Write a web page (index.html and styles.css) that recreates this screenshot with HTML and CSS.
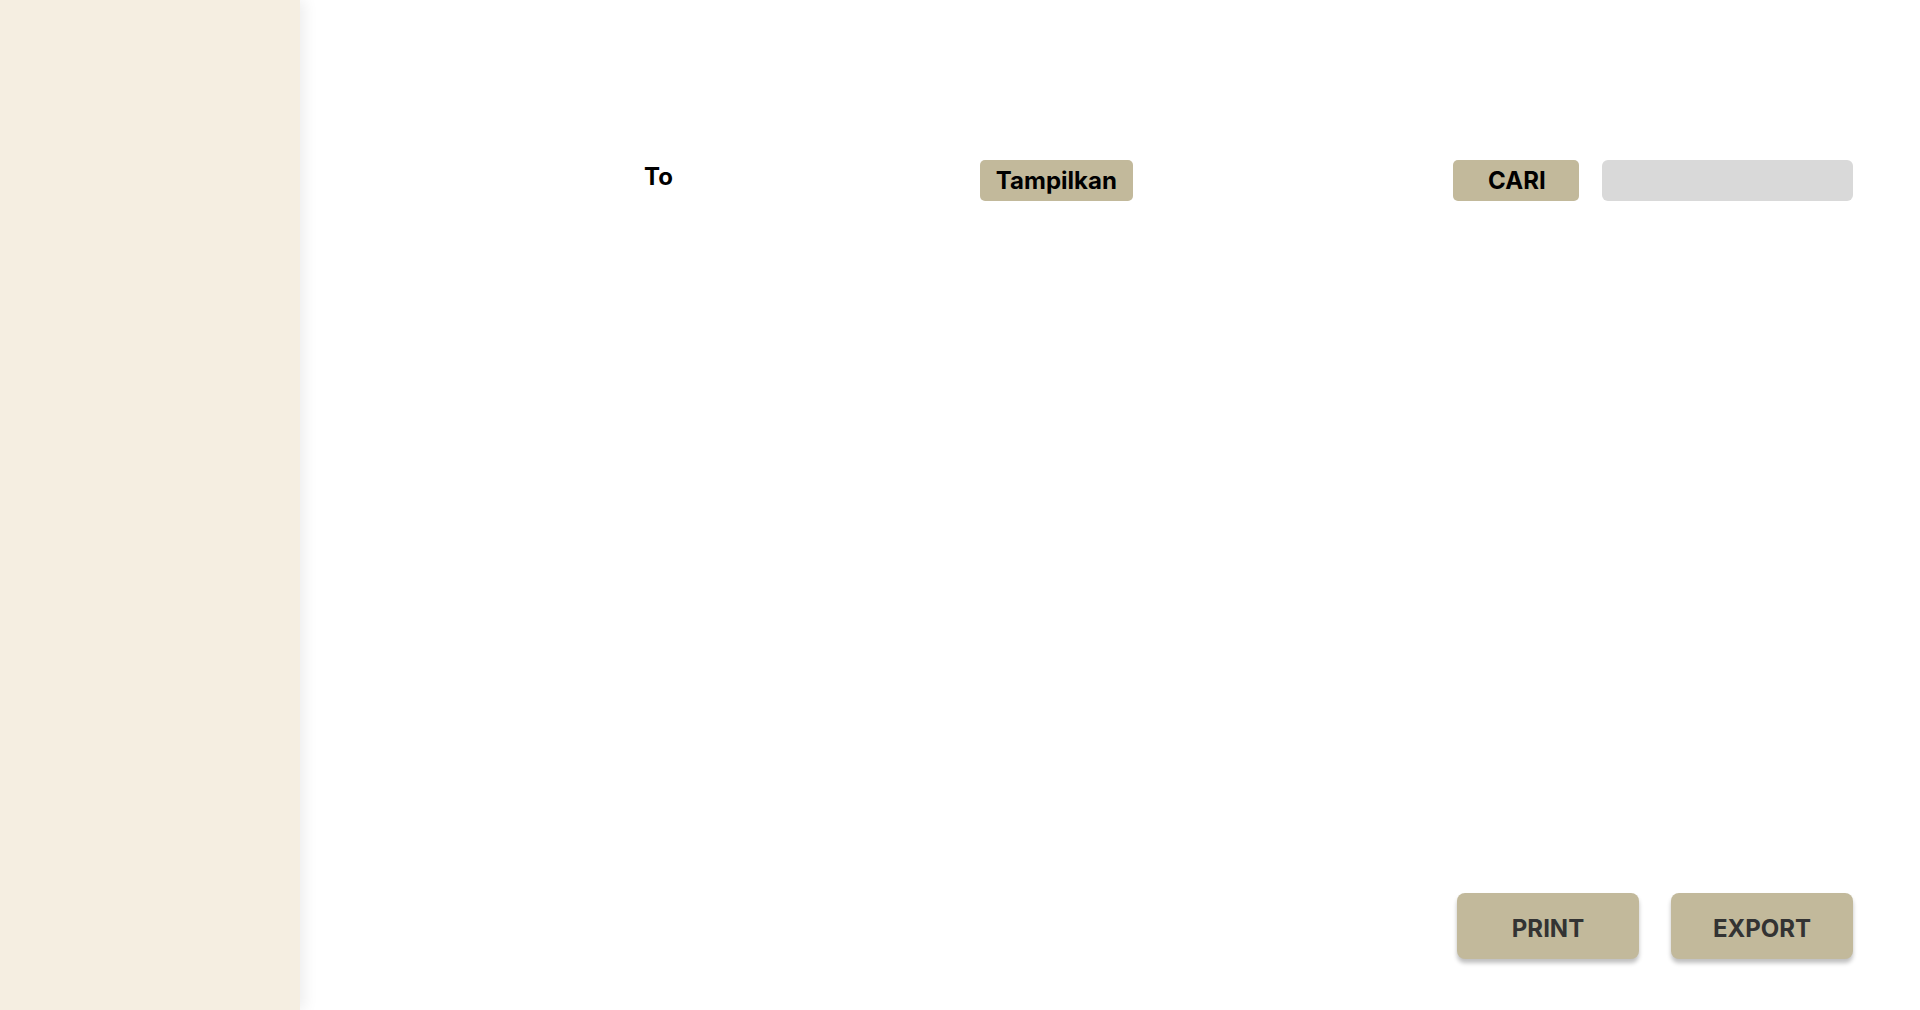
FILE: index.html
```html
<!DOCTYPE html>
<html lang="id">
<head>
<meta charset="utf-8">
<title>Laporan</title>
<link rel="stylesheet" href="styles.css">
</head>
<body>
<div class="app">
  <aside class="sidebar"></aside>
  <main class="main">
    <div class="toolbar">
      <span class="label-to">To</span>
      <button class="btn btn-show">Tampilkan</button>
      <button class="btn btn-search">CARI</button>
      <input class="search-input" type="text" aria-label="Cari">
    </div>
    <div class="content"></div>
    <div class="actions">
      <button class="btn-action">PRINT</button>
      <button class="btn-action">EXPORT</button>
    </div>
  </main>
</div>
</body>
</html>
```
FILE: styles.css
```css
html, body {
  margin: 0;
  padding: 0;
  height: 100%;
  background: #ffffff;
  font-family: Inter, "Noto Sans", sans-serif;
}
.app {
  display: flex;
  height: 1010px;
  overflow: hidden;
}
.sidebar {
  width: 300px;
  flex: 0 0 300px;
  background: #F5EEE1;
  box-shadow: 4px 0 14px rgba(0, 0, 0, 0.08);
  position: relative;
  z-index: 1;
}
.main {
  flex: 1;
  display: flex;
  flex-direction: column;
  padding: 160px 67px 51px 0;
}
.toolbar {
  display: flex;
  align-items: flex-start;
  height: 41px;
}
.label-to {
  margin-left: 344px;
  margin-top: 3px;
  font-size: 24px;
  font-weight: 700;
  color: #000;
  line-height: 28px;
}
.btn {
  height: 41px;
  border: none;
  border-radius: 5px;
  background: #C2B99B;
  color: #000;
  font-family: Inter, "Noto Sans", sans-serif;
  font-weight: 700;
  font-size: 24px;
  padding: 0;
  cursor: pointer;
}
.btn-show {
  width: 153px;
  margin-left: 307px;
}
.btn-search {
  width: 126px;
  margin-left: 320px;
  padding-left: 2px;
}
.search-input {
  width: 251px;
  height: 41px;
  box-sizing: border-box;
  margin-left: 23px;
  border: none;
  border-radius: 6px;
  background: #D9D9D9;
  outline: none;
}
.content {
  flex: 1;
}
.actions {
  display: flex;
  justify-content: flex-end;
  gap: 32px;
}
.btn-action {
  width: 182px;
  height: 66px;
  border: none;
  border-radius: 8px;
  background: #C2B99B;
  color: #333333;
  font-family: Inter, "Noto Sans", sans-serif;
  font-weight: 700;
  font-size: 24px;
  padding: 5px 0 0;
  box-shadow: 0 4px 4px rgba(0, 0, 0, 0.25);
  cursor: pointer;
}
```
